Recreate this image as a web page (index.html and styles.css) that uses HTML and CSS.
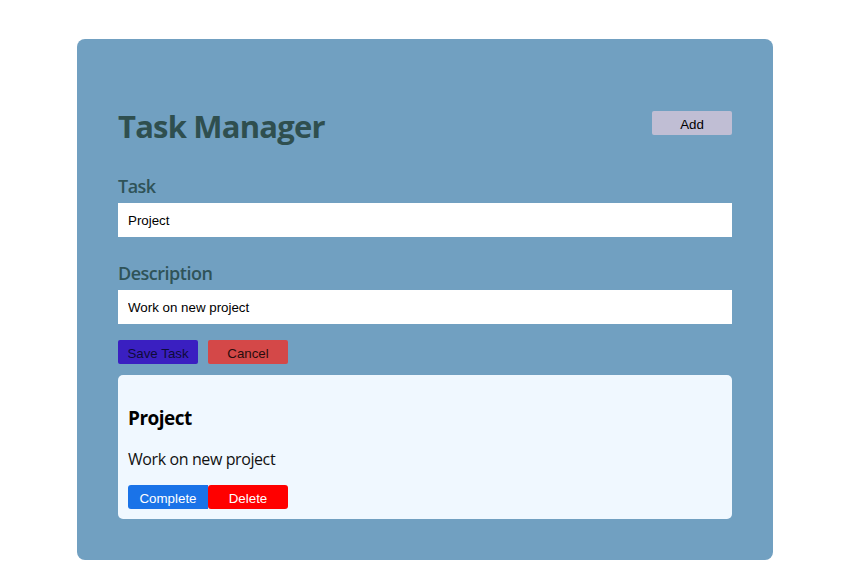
FILE: index.html
```html
<!DOCTYPE html>
<html lang="en">
<head>
<meta charset="utf-8">
<title>Task Manager</title>
<link rel="stylesheet" href="styles.css">
</head>
<body>
<div class="app">
  <div class="header">
    <h1 class="title">Task Manager</h1>
    <button class="btn btn-add">Add</button>
  </div>
  <label class="label label-task">Task</label>
  <input class="field" type="text" value="Project">
  <label class="label label-desc">Description</label>
  <input class="field" type="text" value="Work on new project">
  <div class="actions">
    <button class="btn btn-save">Save Task</button>
    <button class="btn btn-cancel">Cancel</button>
  </div>
  <div class="card">
    <h2 class="card-title">Project</h2>
    <p class="card-desc">Work on new project</p>
    <div class="card-actions">
      <button class="btn btn-complete">Complete</button>
      <button class="btn btn-delete">Delete</button>
    </div>
  </div>
</div>
</body>
</html>
```
FILE: styles.css
```css
html, body {
  margin: 0;
  padding: 0;
  background: #ffffff;
}
body {
  padding-top: 39px;
  font-family: "Open Sans", "Noto Sans", sans-serif;
}
.app {
  width: 696px;
  height: 521px;
  box-sizing: border-box;
  margin-left: 77px;
  padding: 41px;
  background: #71a0c1;
  border-radius: 8px;
}
.header {
  display: flex;
  justify-content: space-between;
  align-items: center;
  margin-top: 24px;
  height: 44px;
}
.title {
  margin: 0;
  font-size: 31px;
  line-height: 44px;
  letter-spacing: -0.8px;
  font-weight: 700;
  color: #2f4f4f;
}
.btn {
  width: 80px;
  height: 24px;
  border: none;
  border-radius: 2px;
  padding: 3px 0 0;
  font-family: "Liberation Sans", Arial, sans-serif;
  font-size: 13.33px;
  color: #000;
}
.btn-add {
  background: #c0bed4;
  margin-bottom: 6px;
}
.label {
  display: block;
  font-size: 18px;
  line-height: 24px;
  letter-spacing: -0.5px;
  font-weight: 600;
  color: #2f5358;
}
.label-task { margin-top: 26px; margin-bottom: 5px; }
.label-desc { margin-top: 24px; margin-bottom: 5px; }
.field {
  display: block;
  width: 100%;
  height: 34px;
  box-sizing: border-box;
  border: none;
  padding: 0 10px;
  background: #fff;
  font-family: "Liberation Sans", Arial, sans-serif;
  font-size: 13.33px;
  color: #000;
  outline: none;
}
.actions {
  display: flex;
  gap: 10px;
  margin-top: 16px;
}
.btn-save { background: #3a1fc1; color: #0e0b3a; }
.btn-cancel { background: #d44848; color: #2a0c0c; }
.card {
  margin-top: 11px;
  height: 144px;
  box-sizing: border-box;
  padding: 10px;
  background: #f0f8ff;
  border-radius: 5px;
}
.card-title {
  margin: 19px 0 0;
  font-size: 19px;
  line-height: 28px;
  letter-spacing: -0.5px;
  font-weight: 700;
  color: #000;
}
.card-desc {
  margin: 16px 0 0;
  font-size: 16px;
  line-height: 22px;
  letter-spacing: -0.4px;
  color: #111;
}
.card-actions {
  display: flex;
  margin-top: 15px;
}
.btn-complete { background: #1a73e8; color: #fff; border-radius: 3px 0 0 3px; }
.btn-delete { background: #ff0000; color: #fff; border-radius: 3px; }
```
